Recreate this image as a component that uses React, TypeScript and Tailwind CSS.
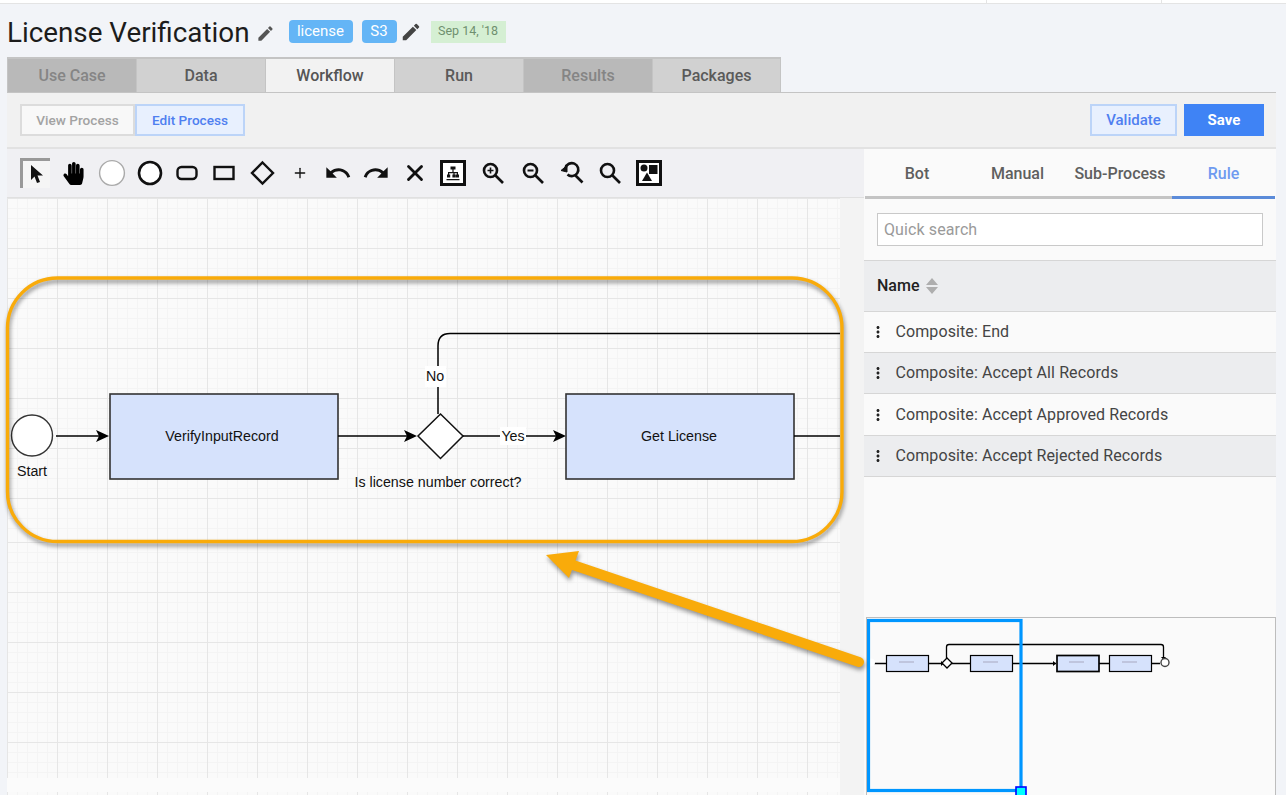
import React from 'react';
import { MdEdit, MdUndo, MdRedo, MdMoreVert } from 'react-icons/md';
import { FaHandPaper } from 'react-icons/fa';
import { Plus, X } from 'lucide-react';

const tabs = [
  { label: 'Use Case', state: 'disabled' },
  { label: 'Data', state: 'normal' },
  { label: 'Workflow', state: 'active' },
  { label: 'Run', state: 'normal' },
  { label: 'Results', state: 'disabled' },
  { label: 'Packages', state: 'normal' },
];

const rules = [
  'Composite: End',
  'Composite: Accept All Records',
  'Composite: Accept Approved Records',
  'Composite: Accept Rejected Records',
];

const gridClass =
  'bg-[#fafafa] bg-[linear-gradient(#e6e6e6_1px,transparent_1px),linear-gradient(90deg,#e6e6e6_1px,transparent_1px),linear-gradient(#f4f4f4_1px,transparent_1px),linear-gradient(90deg,#f4f4f4_1px,transparent_1px)] bg-[size:50px_50px,50px_50px,10px_10px,10px_10px]';

const Shape: React.FC<{ children: React.ReactNode }> = ({ children }) => (
  <svg width="28" height="28" viewBox="0 0 28 28" fill="none" stroke="#111" strokeWidth="2.400">
    {children}
  </svg>
);

const Lens: React.FC<{ children?: React.ReactNode }> = ({ children }) => (
  <svg width="24" height="24" viewBox="0 0 24 24" fill="none" stroke="#111" strokeWidth="2.600">
    <circle cx="9.500" cy="9.500" r="6.500" />
    <path d="M14.500 14.500 L22 22" />
    {children}
  </svg>
);

const ToolCell: React.FC<{ className: string; children: React.ReactNode }> = ({ className, children }) => (
  <div className={`flex w-[28px] shrink-0 items-center justify-center ${className}`}>{children}</div>
);

const Toolbar = () => (
  <div className="flex h-[49px] items-center border-b border-[#e0e0e0] bg-[#f0f0f3] pl-[13px]">
    <div className="flex h-[30px] w-[30px] shrink-0 items-center justify-center border-t-[3px] border-l-[3px] border-[#999] bg-[#f5f5f5]">
      <svg width="16" height="21" viewBox="0 0 16 21">
        <path d="M2 1 L2 16 L5.500 12.500 L8 19 L11 18 L8.500 11.500 L14 11.500 Z" fill="#111" />
      </svg>
    </div>
    <ToolCell className="ml-[9px]">
      <FaHandPaper className="h-[23px] w-[23px] text-black" />
    </ToolCell>
    <ToolCell className="ml-[11px]">
      <Shape>
        <circle cx="14" cy="14" r="12.400" fill="#fff" stroke="#aaa" strokeWidth="1.400" />
      </Shape>
    </ToolCell>
    <ToolCell className="ml-[10px]">
      <Shape>
        <circle cx="14" cy="14" r="11" fill="#fff" strokeWidth="2.600" />
      </Shape>
    </ToolCell>
    <ToolCell className="ml-[9px]">
      <Shape>
        <rect x="4.500" y="8" width="19" height="12" rx="4" />
      </Shape>
    </ToolCell>
    <ToolCell className="ml-[9px]">
      <Shape>
        <rect x="4.500" y="8" width="19" height="12" />
      </Shape>
    </ToolCell>
    <ToolCell className="ml-[10px]">
      <Shape>
        <path d="M14.500 3.500 L25 14 L14.500 24.500 L4 14 Z" />
      </Shape>
    </ToolCell>
    <ToolCell className="ml-[10px]">
      <Plus className="h-[16px] w-[16px] text-[#111]" strokeWidth={2} />
    </ToolCell>
    <ToolCell className="ml-[10px]">
      <MdUndo className="h-[28px] w-[28px] text-[#111]" />
    </ToolCell>
    <ToolCell className="ml-[10px]">
      <MdRedo className="h-[28px] w-[28px] text-[#111]" />
    </ToolCell>
    <ToolCell className="ml-[11px]">
      <X className="h-[26px] w-[26px] text-[#111]" strokeWidth={2.600} />
    </ToolCell>
    <ToolCell className="ml-[10px]">
      <svg width="26" height="26" viewBox="0 0 26 26">
        <rect x="1.500" y="1.500" width="23" height="23" fill="#fff" stroke="#111" strokeWidth="3" />
        <path d="M10.500 6.500h5v3h-5z M12.400 9.500h1.200v2.500h4.400v2.500h1v3h-3.200v-3h1v-1.300h-2.200v1.300h1v3h-3.200v-3h1v-1.300H9.200v1.300h1v3H7v-3h1V12h4.400z M6.500 19h13v1.200h-13z" fill="#111" />
      </svg>
    </ToolCell>
    <ToolCell className="ml-[12px]">
      <Lens>
        <path d="M6.500 9.500 H12.500 M9.500 6.500 V12.500" strokeWidth="1.600" />
      </Lens>
    </ToolCell>
    <ToolCell className="ml-[12px]">
      <Lens>
        <path d="M6.500 9.500 H12.500" strokeWidth="2" />
      </Lens>
    </ToolCell>
    <ToolCell className="ml-[11px]">
      <svg width="26" height="26" viewBox="0 0 26 26" fill="none" stroke="#111" strokeWidth="2.600">
        <path d="M6.500 8 A6.500 6.500 0 1 1 8.500 14.500" />
        <path d="M16 15 L23.500 22.500" />
        <path d="M2 10.500 L8 5.500 L8 12 Z" fill="#111" strokeWidth="1" />
      </svg>
    </ToolCell>
    <ToolCell className="ml-[10px]">
      <Lens />
    </ToolCell>
    <ToolCell className="ml-[11px]">
      <svg width="26" height="26" viewBox="0 0 26 26">
        <rect x="1.500" y="1.500" width="23" height="23" fill="#fff" stroke="#111" strokeWidth="3" />
        <rect x="13" y="5" width="8.500" height="9" fill="#111" />
        <circle cx="8" cy="8" r="3.500" fill="#111" />
        <path d="M6 21 L11 12.500 L16 21 Z" fill="#111" />
      </svg>
    </ToolCell>
  </div>
);

const Arrowhead: React.FC<{ x: number; y: number }> = ({ x, y }) => (
  <path d={`M${x} ${y} L${x - 13} ${y - 6} L${x - 10} ${y} L${x - 13} ${y + 6} Z`} fill="#000" />
);

const Diagram = () => (
  <svg
    className="absolute top-0 left-0"
    width="833"
    height="597"
    viewBox="7 198 833 597"
    fontFamily="'Liberation Sans', Arial, sans-serif"
    fontSize="14.25"
  >
    <circle cx="32" cy="435.500" r="20.500" fill="#fff" stroke="#333" strokeWidth="1.400" />
    <text x="32" y="476" textAnchor="middle" fill="#111">Start</text>

    <path d="M56 436 H100" stroke="#000" strokeWidth="1.500" fill="none" />
    <Arrowhead x={109} y={436} />
    <rect x="110" y="394" width="228" height="85" fill="#d6e2fc" stroke="#333" strokeWidth="1.600" />
    <text x="222" y="441" textAnchor="middle" fill="#111">VerifyInputRecord</text>

    <path d="M338 436 H408" stroke="#000" strokeWidth="1.500" fill="none" />
    <Arrowhead x={417} y={436} />
    <path d="M438 414 V346 Q438 333.500 450 333.500 H840" stroke="#000" strokeWidth="1.500" fill="none" />
    <path d="M440.500 414 L463 436 L440.500 458.500 L418 436 Z" fill="#fff" stroke="#111" strokeWidth="1.500" />
    <text x="438" y="487" textAnchor="middle" fill="#111">Is license number correct?</text>

    <rect x="425" y="366" width="21" height="21" fill="#fff" />
    <text x="435" y="381" textAnchor="middle" fill="#111">No</text>

    <path d="M463 436 H557" stroke="#000" strokeWidth="1.500" fill="none" />
    <Arrowhead x={566} y={436} />
    <rect x="500" y="427" width="26" height="18" fill="#fff" />
    <text x="513" y="441" textAnchor="middle" fill="#111">Yes</text>
    <rect x="566" y="394" width="228" height="85" fill="#d6e2fc" stroke="#333" strokeWidth="1.600" />
    <text x="679" y="441" textAnchor="middle" fill="#111">Get License</text>
    <path d="M794 436 H840" stroke="#000" strokeWidth="1.500" fill="none" />
  </svg>
);

const Minimap = () => (
  <div className="relative ml-[2px] h-[178px] border-t border-r border-l border-[#bdbdbd] bg-[#fafafa]">
    <svg className="absolute top-0 left-0" width="409" height="178" viewBox="867 618 409 178">
      <g stroke="#000" strokeWidth="1.300" fill="none">
        <path d="M870 663.500 H886 M929 663.500 H970 M1013 663.500 H1056 M1099 663.500 H1109 M1152 663.500 H1160" />
        <path d="M946.500 658 V647 Q946.500 644.500 949 644.500 H1161 Q1163.500 644.500 1163.500 647 V658" />
      </g>
      <path d="M1161 657 H1166 L1163.500 660 Z M941 661 L944 663.500 L941 666 Z M1053 661 L1056 663.500 L1053 666 Z" fill="#000" />
      <rect x="886.500" y="655.500" width="42" height="16" fill="#d6e2fc" stroke="#000" strokeWidth="1.200" />
      <rect x="970.500" y="655.500" width="42" height="16" fill="#d6e2fc" stroke="#000" strokeWidth="1.200" />
      <rect x="1057" y="655.500" width="42" height="16" fill="#d6e2fc" stroke="#000" strokeWidth="1.700" />
      <rect x="1109.500" y="655.500" width="42" height="16" fill="#d6e2fc" stroke="#000" strokeWidth="1.200" />
      <path d="M947 658 L952 663 L947 668 L942 663 Z" fill="#fff" stroke="#000" strokeWidth="1.300" />
      <circle cx="1165" cy="662.500" r="4" fill="#fff" stroke="#444" strokeWidth="1.400" />
      <circle cx="871" cy="662.500" r="4" fill="#fff" />
      <path d="M899 662 H914 M983 662 H998 M1069 662 H1084 M1122 662 H1137" stroke="#a8a8c0" strokeWidth="1" />
      <rect x="868.500" y="620.500" width="152.500" height="170" fill="none" stroke="#0096ff" strokeWidth="3.200" />
      <rect x="1016" y="787" width="10" height="10" fill="#00ffff" stroke="#0000ff" strokeWidth="1.600" />
    </svg>
  </div>
);

const Annotation = () => (
  <svg className="pointer-events-none absolute top-0 left-0" width="1286" height="795" viewBox="0 0 1286 795">
    <rect
      x="7.500"
      y="278"
      width="834.500"
      height="263.500"
      rx="50"
      fill="none"
      stroke="#f9ab0a"
      strokeWidth="3.400"
      className="drop-shadow-[1px_3px_2px_rgba(0,0,0,0.45)]"
    />
    <g className="drop-shadow-[1px_3px_2px_rgba(0,0,0,0.4)]">
      <path d="M859 662 L573 565" fill="none" stroke="#f9ab0a" strokeWidth="10" strokeLinecap="round" />
      <path d="M546 555 L579 551 L569 578 Z" fill="#f9ab0a" />
    </g>
  </svg>
);

export default function App() {
  return (
    <div className="relative h-[795px] w-[1286px] overflow-hidden bg-[#f2f4f8] font-['Roboto',sans-serif]">
      <div className="flex h-[4px] border-b border-[#e4e4e4] bg-white">
        <div className="w-[987px] border-r border-[#e4e4e4]" />
        <div className="w-[175px] border-r border-[#e4e4e4]" />
      </div>

      <div className="flex h-[53px] items-center pt-[2px] pl-[7px]">
        <h1 className="pt-[2px] text-[27.800px] font-normal text-[#1c1c1c]">License Verification</h1>
        <MdEdit className="mt-[3px] ml-[6px] h-[19px] w-[19px] text-[#555]" />
        <span className="ml-[14px] flex h-[23px] w-[64px] items-center justify-center rounded-[4px] bg-[#64b5f6] text-[15px] text-white">
          license
        </span>
        <span className="ml-[9px] flex h-[23px] w-[35px] items-center justify-center rounded-[4px] bg-[#64b5f6] text-[15px] text-white">
          S3
        </span>
        <MdEdit className="ml-[3px] h-[22px] w-[22px] text-[#444]" />
        <span className="ml-[9px] flex h-[22px] w-[75px] items-center justify-center bg-[#d5efd3] text-[12.500px] text-[#6f8f6f]">
          Sep 14, '18
        </span>
      </div>

      <div className="ml-[7px] flex h-[35px]">
        {tabs.map((tab) => (
          <div
            key={tab.label}
            className={`flex w-[129px] items-center justify-center border-t-2 border-l border-[#c4c4c4] pt-px text-[16px] font-medium last:border-r ${
              tab.state === 'active'
                ? 'bg-[#f2f2f2] text-[#555]'
                : tab.state === 'disabled'
                  ? 'bg-[#b9b9b9] text-[#858585]'
                  : 'bg-[#d1d1d1] text-[#5a5a5a]'
            }`}
          >
            {tab.label}
          </div>
        ))}
      </div>

      <div className="ml-[7px] w-[1269px] border-t border-[#c4c4c4]">
        <div className="flex h-[56px] items-center justify-between border-b-2 border-[#e2e2e2] bg-[#f1f1f1] pr-[12px] pl-[13px]">
          <div className="flex">
            <div className="flex h-[32px] w-[115px] items-center justify-center border-2 border-[#dcdcdc] bg-[#f8f8f8] text-[13.600px] font-medium text-[#a3a3a3]">
              View Process
            </div>
            <div className="flex h-[32px] w-[110px] items-center justify-center border-2 border-[#bcd4f8] bg-[#e8f0fe] text-[13.600px] font-medium text-[#4f7ff0]">
              Edit Process
            </div>
          </div>
          <div className="flex gap-[7px]">
            <div className="flex h-[32px] w-[87px] items-center justify-center border-2 border-[#bcd4f8] bg-[#e8f0fe] text-[15px] font-medium text-[#4f7ff0]">
              Validate
            </div>
            <div className="flex h-[32px] w-[80px] items-center justify-center bg-[#3f83f5] text-[15px] font-bold text-white">
              Save
            </div>
          </div>
        </div>

        <div className="flex h-[646px]">
          <div className="flex w-[857px] flex-col">
            <Toolbar />
            <div className="flex flex-1">
              <div className="relative flex w-[833px] flex-col">
                <div className={`h-[340px] ${gridClass}`} />
                <div className={`h-[240px] bg-[position:0_4px] ${gridClass}`} />
                <div className="h-[14px] bg-[#fbfbfb]" />
                <div className={`flex-1 bg-[position:0_-5px] ${gridClass}`} />
                <Diagram />
              </div>
              <div className="flex-1 bg-[#f3f3f3]" />
            </div>
          </div>

          <div className="flex w-[412px] flex-col bg-[#fafafa]">
            <div className="ml-px flex h-[50px] text-[16px] font-medium text-[#5f5f5f]">
              <div className="flex w-[104px] items-center justify-center border-b-[3px] border-[#c4c4c4] pt-[3px]">Bot</div>
              <div className="flex w-[97px] items-center justify-center border-b-[3px] border-[#c4c4c4] pt-[3px]">Manual</div>
              <div className="flex w-[106px] items-center justify-center border-b-[3px] border-[#c4c4c4] pt-[3px] pl-[2px]">
                Sub-Process
              </div>
              <div className="flex w-[103px] items-center justify-center border-b-[3px] border-[#5b8bd9] pt-[3px] text-[#6f9bf0]">
                Rule
              </div>
            </div>
            <div className="flex h-[61px] items-center px-[13px]">
              <div className="flex h-[33px] w-[388px] items-center border border-[#c9c9c9] bg-white pl-[6px] text-[16px] tracking-[0.1px] text-[#9a9a9a]">
                Quick search
              </div>
            </div>
            <div className="flex h-[52px] items-center gap-[7px] border-t border-b border-[#d6d6d6] bg-[#ecedef] pl-[13px] text-[16px] font-medium text-[#222]">
              Name
              <svg width="12" height="18" viewBox="0 0 12 18" fill="#aeaeae">
                <path d="M6 1 L12 8 H0 Z M0 10 H12 L6 17 Z" />
              </svg>
            </div>
            {rules.map((rule, i) => (
              <div
                key={rule}
                className={`flex items-center border-b border-[#d6d6d6] text-[16px] tracking-[0.1px] text-[#444] ${
                  i === 2 ? 'h-[42px]' : 'h-[41px]'
                } ${i % 2 === 1 ? 'bg-[#ecedef]' : i === 3 ? 'bg-[#ecedef]' : 'bg-[#fafafa]'}`}
              >
                <MdMoreVert className="ml-[5px] h-[18px] w-[18px] text-[#222]" />
                <span className="ml-[8.500px]">{rule}</span>
              </div>
            ))}
            <div className="flex-1" />
            <Minimap />
          </div>
        </div>
      </div>

      <Annotation />
    </div>
  );
}
